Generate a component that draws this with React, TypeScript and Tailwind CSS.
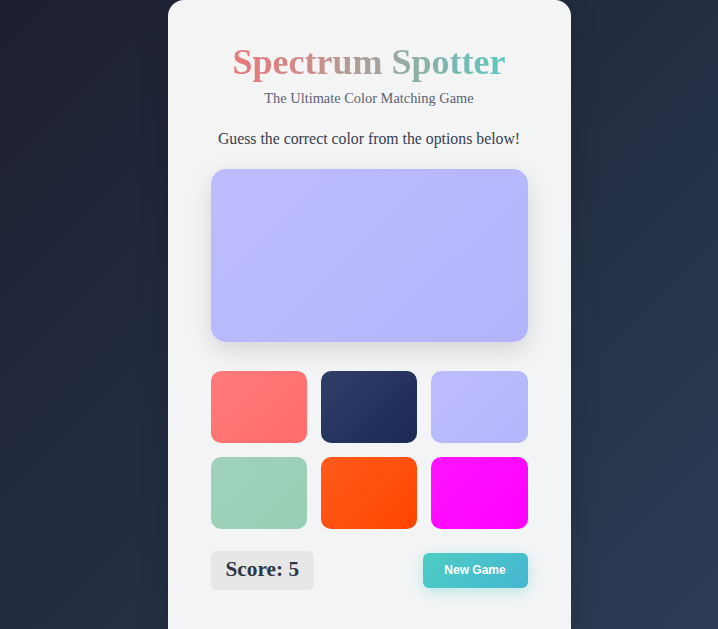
import React from "react";

const swatches = [
  "bg-[linear-gradient(135deg,#ff7b7b,#ff6b6b)]",
  "bg-[linear-gradient(135deg,#2f3f68,#1b2a54)]",
  "bg-[linear-gradient(135deg,#bcbcfe,#b5b5fc)]",
  "bg-[linear-gradient(135deg,#a0d2bb,#98ceb4)]",
  "bg-[linear-gradient(135deg,#ff5a1c,#ff4500)]",
  "bg-[linear-gradient(135deg,#ff14ff,#ff00ff)]",
];

export default function App() {
  return (
    <div className="w-full bg-[linear-gradient(135deg,#1c1f30,#2b3c55)] flex justify-center overflow-hidden h-[629px] pl-[20px]">
      <div className="w-[403px] shrink-0 rounded-t-[16px] bg-[linear-gradient(160deg,#f4f4f4,#f3f4f6)] px-[43px] pt-[41px] pb-10 h-[680px] flex flex-col items-stretch shadow-[0_10px_30px_rgba(0,0,0,0.15)]">
        <h1 className="text-center text-[36px] leading-[1.2] font-bold font-['Liberation_Serif',serif]">
          <span className="bg-[linear-gradient(90deg,#e8767a_0%,#c98f8c_30%,#9ea69e_57%,#5ec8c0_100%)] bg-clip-text text-transparent">
            Spectrum Spotter
          </span>
        </h1>
        <p className="mt-[4px] text-center text-[14.4px] leading-[1.5] text-[#5a6377] font-['Liberation_Serif',serif]">
          The Ultimate Color Matching Game
        </p>
        <p className="mt-[17px] text-center text-[15.8px] leading-[24px] text-[#363e50] font-['Liberation_Serif',serif]">
          Guess the correct color from the options below!
        </p>
        <div className="mt-[18px] h-[173px] rounded-[15px] bg-[linear-gradient(135deg,#bcbcfe,#b4b4fc)] shadow-[0_8px_24px_rgba(0,0,0,0.13)]" />
        <div className="mt-[29px] grid grid-cols-3 gap-[14px]">
          {swatches.map((c, i) => (
            <div key={i} className={`h-[72px] rounded-[10px] ${c}`} />
          ))}
        </div>
        <div className="mt-[22px] flex items-center justify-between">
          <div className="h-[39px] px-[15px] flex items-center rounded-[6px] bg-[#e7e7e8] text-[21.3px] font-bold text-[#2d3446] font-['Liberation_Serif',serif]">
            Score: 5
          </div>
          <button className="h-[35px] w-[105px] rounded-[6px] bg-[linear-gradient(135deg,#4ecdc4,#45b7d1)] text-white text-[12px] font-bold font-['Liberation_Sans',Arial,sans-serif] shadow-[0_4px_14px_rgba(78,205,196,0.35)]">
            New Game
          </button>
        </div>
      </div>
    </div>
  );
}
